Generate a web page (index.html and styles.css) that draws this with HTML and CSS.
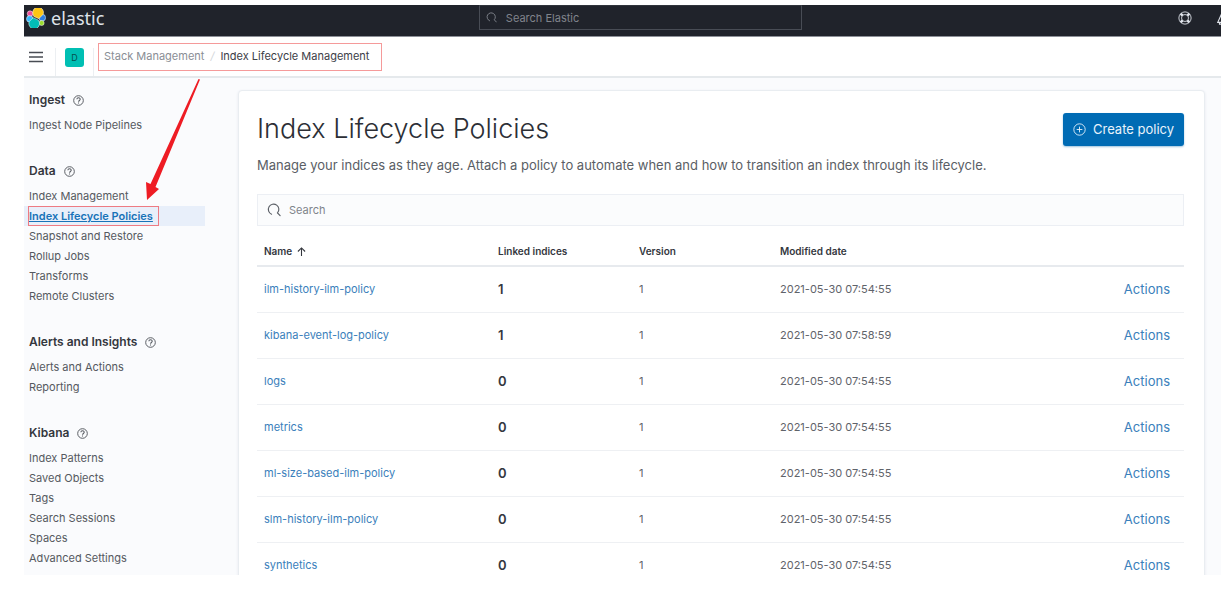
FILE: index.html
```
<!DOCTYPE html>
<html lang="en">
<head>
<meta charset="utf-8">
<title>Index Lifecycle Policies - Elastic</title>
<link rel="stylesheet" href="styles.css">
</head>
<body>
<svg class="sprite" aria-hidden="true">
  <symbol id="i-help" viewBox="0 0 16 16"><circle cx="8" cy="8" r="7" fill="none" stroke="currentColor" stroke-width="1.400"/><path d="M5.600 6.300c0-3 4.900-3 4.900 0 0 1.800-2.400 1.600-2.400 3.600M8 11v1.500" fill="none" stroke="currentColor" stroke-width="1.500"/></symbol>
  <symbol id="i-search" viewBox="0 0 16 16"><path d="M5.200 12.800A6 6 0 1 1 12 11.300l3 3.200" fill="none" stroke="currentColor" stroke-width="1.300" stroke-linecap="round"/></symbol>
</svg>
<div class="app">
  <header class="topbar">
    <a class="brand" href="#">
      <svg class="logo" viewBox="0 0 32 32" aria-hidden="true">
        <g stroke="#fff" stroke-width="0.800">
        <circle cx="6.500" cy="9" r="4.500" fill="#f04e98"/>
        <circle cx="6" cy="17.500" r="5.200" fill="#36b9ff"/>
        <circle cx="26" cy="15.500" r="5.400" fill="#2f7de0"/>
        <circle cx="25" cy="24" r="4" fill="#9adc30"/>
        <path d="M12.500 13.500 20.500 17l7-7A8.600 8.600 0 1 0 11 9z" fill="#fec514"/>
        <path d="M20 19.500 11.500 15.500 5 22A8.600 8.600 0 1 0 21.500 23z" fill="#02bcb7"/>
        </g>
      </svg>
      <span>elastic</span>
    </a>
    <label class="global-search"><svg aria-hidden="true"><use href="#i-search"/></svg><input type="search" placeholder="Search Elastic" aria-label="Search Elastic"></label>
    <div class="tools">
      <button type="button" aria-label="Help"><svg viewBox="0 0 16 16"><g fill="none" stroke="currentColor"><circle cx="8" cy="8" r="7"/><circle cx="8" cy="8" r="4"/><path d="m3 3 2.300 2.300M13 3l-2.300 2.300M3 13l2.300-2.300M13 13l-2.300-2.300" stroke-width="3"/></g></svg></button>
      <button type="button" aria-label="News"><svg viewBox="0 0 16 16"><path d="M2 13 7 2l4 11zM4 13v2h4" fill="none" stroke="currentColor" stroke-width="1.300"/></svg></button>
    </div>
  </header>
  <div class="navbar">
    <button class="menu" type="button" aria-label="Menu"><svg viewBox="0 0 14 12"><path d="M0 1.500h14M0 6h14M0 10.500h14" stroke="currentColor" stroke-width="1.600"/></svg></button>
    <div class="space"><button type="button" aria-label="Default space">D</button></div>
    <nav class="crumbs" aria-label="Breadcrumb"><a href="#">Stack Management</a><i>/</i><span>Index Lifecycle Management</span></nav>
  </div>
  <div class="body">
    <nav class="side" aria-label="Stack Management">
      <section><h2>Ingest <svg><use href="#i-help"/></svg></h2>
        <ul><li><a href="#">Ingest Node Pipelines</a></li></ul></section>
      <section><h2>Data <svg><use href="#i-help"/></svg></h2>
        <ul><li><a href="#">Index Management</a></li><li class="active"><a href="#" aria-current="page">Index Lifecycle Policies</a></li><li><a href="#">Snapshot and Restore</a></li><li><a href="#">Rollup Jobs</a></li><li><a href="#">Transforms</a></li><li><a href="#">Remote Clusters</a></li></ul></section>
      <section><h2>Alerts and Insights <svg><use href="#i-help"/></svg></h2>
        <ul><li><a href="#">Alerts and Actions</a></li><li><a href="#">Reporting</a></li></ul></section>
      <section><h2>Kibana <svg><use href="#i-help"/></svg></h2>
        <ul><li><a href="#">Index Patterns</a></li><li><a href="#">Saved Objects</a></li><li><a href="#">Tags</a></li><li><a href="#">Search Sessions</a></li><li><a href="#">Spaces</a></li><li><a href="#">Advanced Settings</a></li></ul></section>
    </nav>
    <main class="panel">
      <div class="heading">
        <h1>Index Lifecycle Policies</h1>
        <button class="create" type="button"><svg viewBox="0 0 16 16" aria-hidden="true"><path d="M8 1a7 7 0 1 0 0 14A7 7 0 0 0 8 1zM8 4.500v7M4.500 8h7" fill="none" stroke="currentColor" stroke-width="1.100"/></svg>Create policy</button>
      </div>
      <p class="intro">Manage your indices as they age. Attach a policy to automate when and how to transition an index through its lifecycle.</p>
      <label class="search"><svg aria-hidden="true"><use href="#i-search"/></svg><input type="search" placeholder="Search" aria-label="Search policies"></label>
      <table>
        <thead><tr><th class="c-name">Name <svg viewBox="0 0 10 10" aria-hidden="true"><path d="M5 10V1M1 5l4-4 4 4" fill="none" stroke="currentColor" stroke-width="1.200"/></svg></th><th class="c-mid">Linked indices</th><th class="c-mid">Version</th><th>Modified date</th><th aria-label="Actions"></th></tr></thead>
        <tbody>
          <tr><td><a href="#">ilm-history-ilm-policy</a></td><td class="num">1</td><td>1</td><td>2021-05-30 07:54:55</td><td class="act"><button type="button">Actions</button></td></tr>
          <tr><td><a href="#">kibana-event-log-policy</a></td><td class="num">1</td><td>1</td><td>2021-05-30 07:58:59</td><td class="act"><button type="button">Actions</button></td></tr>
          <tr><td><a href="#">logs</a></td><td class="num">0</td><td>1</td><td>2021-05-30 07:54:55</td><td class="act"><button type="button">Actions</button></td></tr>
          <tr><td><a href="#">metrics</a></td><td class="num">0</td><td>1</td><td>2021-05-30 07:54:55</td><td class="act"><button type="button">Actions</button></td></tr>
          <tr><td><a href="#">ml-size-based-ilm-policy</a></td><td class="num">0</td><td>1</td><td>2021-05-30 07:54:55</td><td class="act"><button type="button">Actions</button></td></tr>
          <tr><td><a href="#">slm-history-ilm-policy</a></td><td class="num">0</td><td>1</td><td>2021-05-30 07:54:55</td><td class="act"><button type="button">Actions</button></td></tr>
          <tr><td><a href="#">synthetics</a></td><td class="num">0</td><td>1</td><td>2021-05-30 07:54:55</td><td class="act"><button type="button">Actions</button></td></tr>
        </tbody>
      </table>
    </main>
  </div>
  <svg class="arrow" viewBox="0 0 60 124" aria-hidden="true"><path d="M54.500 1 56 1.500 11.500 109 15 111 3 122 2 104 6.500 106z" fill="#ee1c24"/></svg>
</div>
</body>
</html>
```
FILE: styles.css
```
* { box-sizing: border-box; }
body { margin: 0; background: #fff; color: #555960; font-family: Inter, "Liberation Sans", sans-serif; font-size: 11px; line-height: 20px; }
a { color: inherit; text-decoration: none; }
button, input { font: inherit; color: inherit; border: 0; background: none; padding: 0; }
h1, h2, p, ul { margin: 0; padding: 0; }
ul { list-style: none; }
svg { display: block; flex: none; }
.sprite { position: absolute; width: 0; height: 0; }

.app { position: relative; display: flex; flex-direction: column; height: calc(100vh - 32px); margin: 5px 0 27px 24px; overflow: hidden; }

.topbar { display: grid; grid-template-columns: 38fr 27fr 35fr; flex: none; height: 32px; background: #20232b; color: #dfe3ea; border-bottom: 1px solid #8d9098; overflow: hidden; }
.brand { display: flex; align-items: center; gap: 5px; height: 25px; padding-left: 2px; font-family: "Noto Sans", sans-serif; font-size: 18px; }
.logo { width: 20px; height: 20px; }
.global-search { display: flex; align-items: center; gap: 9px; height: 25px; padding-left: 6px; border: 1px solid #484c55; border-top-color: #30343c; color: #858991; }
.global-search svg { width: 11px; height: 11px; }
.global-search input { flex: 1; min-width: 0; outline: 0; }
input::placeholder { color: #80848b; opacity: 1; }
.tools { display: flex; justify-content: flex-end; align-items: center; gap: 24px; height: 25px; margin-right: -9px; }
.tools svg { width: 14px; height: 14px; }

.navbar { display: flex; align-items: center; flex: none; height: 41px; background: #fff; border-bottom: 2px solid #e5e9ec; }
.menu { width: 31px; padding-left: 5px; color: #484c53; }
.menu svg { width: 14px; height: 12px; }
.space { display: flex; align-items: center; align-self: flex-end; height: 28px; padding: 0 9px; border: solid #eceff2; border-width: 0 1px; }
.space button { width: 19px; height: 19px; margin-bottom: 9px; border-radius: 3px; background: #00bfb3; color: #064f50; font-size: 9px; line-height: 19px; }
.crumbs { display: flex; gap: 6px; height: 28px; margin-left: 4px; padding: 0 12px 0 5px; border: 1px solid #f59a9a; line-height: 25px; color: #3c4047; }
.crumbs a { color: #8a8e95; }
.crumbs i { color: #d3d6da; }

.body { display: flex; flex: 1; min-height: 0; background: #fafbfd; }
.side { flex: none; width: 181px; margin-right: 33px; padding-top: 12px; }
.side section { margin-bottom: 26px; }
.side h2 { display: flex; align-items: center; gap: 8px; margin-bottom: 5px; padding-left: 5px; font-size: 12px; line-height: 20px; font-weight: 600; color: #34373e; }
.side h2 svg { width: 11px; height: 11px; color: #555960; }
.side li { display: flex; padding-left: 5px; }
.side .active { padding-left: 4px; background: #e8effa; }
.active a { border: 1px solid #ee7b83; padding-right: 5px; line-height: 18px; font-weight: 600; color: #1873b8; text-decoration: underline; }

.panel { flex: 1; min-width: 0; align-self: flex-start; margin: 12px 16px 0 0; padding: 19px 20px 40px 18px; background: #fff; border: 1px solid #e9edf1; border-radius: 4px; box-shadow: 0 1px 3px #e4e9ee; }
.heading { display: flex; justify-content: space-between; align-items: center; height: 38px; }
h1 { font-size: 27px; line-height: 38px; font-weight: 300; color: #2c2f36; }
.create { display: flex; align-items: center; justify-content: center; gap: 7px; width: 121px; height: 33px; border-radius: 3px; background: #006bb4; color: #e9f3fb; font-size: 13px; box-shadow: 0 1px 2px #9dc3de; }
.create svg { width: 13px; height: 13px; }
.intro { margin-top: 7px; font-size: 13px; line-height: 20px; color: #5a5e65; }
.search { display: flex; align-items: center; gap: 8px; height: 32px; margin: 19px 0 11px; padding-left: 9px; background: #fbfcfd; border: 1px solid #eceff4; color: #5b5f66; }
.search svg { width: 14px; height: 14px; }
.search input { flex: 1; min-width: 0; outline: 0; font-size: 11px; }

table { width: 100%; table-layout: fixed; border-collapse: collapse; }
th, td { padding: 0 7px; text-align: left; }
th { height: 29px; border-bottom: 2px solid #e7eaee; font-size: 10px; font-weight: 600; color: #34373e; }
th svg { display: inline-block; width: 9px; height: 9px; vertical-align: -1px; margin-left: 2px; }
.c-name { width: 234px; }
.c-mid { width: 141px; }
td { height: 46px; border-bottom: 1px solid #eef0f3; font-size: 11px; color: #5f636a; }
td a, td button { color: #3a80bb; }
.num { font-size: 13px; font-weight: 600; color: #34373e; }
.act { padding-right: 14px; text-align: right; font-size: 13px; }

.arrow { position: absolute; left: 120px; top: 73px; width: 60px; height: 124px; pointer-events: none; }
```
